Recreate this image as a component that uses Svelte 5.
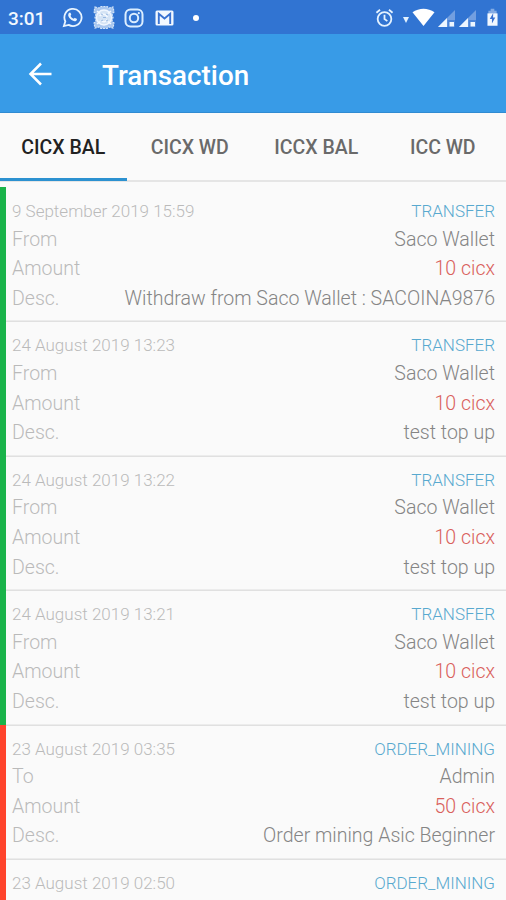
<script>
	const tabs = ['CICX BAL', 'CICX WD', 'ICCX BAL', 'ICC WD'];
	let activeTab = $state(0);

	const transactions = [
		{ date: '9 September 2019 15:59', type: 'TRANSFER', incoming: true, party: 'Saco Wallet', amount: '10 cicx', desc: 'Withdraw from Saco Wallet : SACOINA9876' },
		{ date: '24 August 2019 13:23', type: 'TRANSFER', incoming: true, party: 'Saco Wallet', amount: '10 cicx', desc: 'test top up' },
		{ date: '24 August 2019 13:22', type: 'TRANSFER', incoming: true, party: 'Saco Wallet', amount: '10 cicx', desc: 'test top up' },
		{ date: '24 August 2019 13:21', type: 'TRANSFER', incoming: true, party: 'Saco Wallet', amount: '10 cicx', desc: 'test top up' },
		{ date: '23 August 2019 03:35', type: 'ORDER_MINING', incoming: false, party: 'Admin', amount: '50 cicx', desc: 'Order mining Asic Beginner' },
		// details not loaded yet
		{ date: '23 August 2019 02:50', type: 'ORDER_MINING', incoming: false }
	];
</script>

<div class="screen">
	<div class="status-bar">
		<span class="clock">3:01</span>
		<div class="notifications">
			<!-- WhatsApp -->
			<svg width="21" height="21" viewBox="0 0 22 22" fill="none">
				<path d="M2 20l1.5-5A9 9 0 1 1 7 18.7z" stroke="#e8f4ff" stroke-width="1.9" />
				<path d="M7.3 6.2c.6-.7 1.4-.7 1.7 0l.7 1.7c.1.4-.8 1.1-.7 1.4.7 1.4 1.8 2.4 3.2 3 .4.1 1-1.1 1.4-.9l1.8.9c.5.3.2 1.5-.5 2-1.3 1-3 .6-4.9-.6-1.5-1-3.2-3-3.500-4.700-.1-1.100.2-2.200.8-2.800z" fill="#e8f4ff" />
			</svg>
			<!-- mesh badge -->
			<svg class="mesh" width="22" height="23" viewBox="0 0 22 23" fill="none">
				<path d="M2 1l4 1 2-1.500h6l2 1.500 4-1 1 5-2 2 1 3.500-1 3.500 2 2-1 5-4-1-2 1.500H8L6 21l-4 1-1-5 2-2-1-3.500L3 8 1 6z" fill="#a9c7ef" stroke="#d4e5f8" stroke-width="1.200" stroke-dasharray="2 1" />
				<circle cx="11" cy="11.500" r="7.500" fill="#d5e4f5" stroke="#f1f7ff" stroke-width="1.300" />
				<path d="M4 5l3 2.500M18 5l-3 2.500M4 18l3-2.500M18 18l-3-2.500M6.500 10c3-3 6-2 8 1M8 14.500c2 2 5 1.500 6-1" stroke="#f4f9ff" stroke-width="1.500" />
				<path d="M8 8l2 1M13 8l2 1M8 15l2-1M13 15l2-1M10 11.500h3" stroke="#98b9e3" />
			</svg>
			<!-- Instagram -->
			<svg width="20" height="20" viewBox="0 0 20 20" fill="none" stroke="#dceeff" stroke-width="2">
				<rect x="1.500" y="1.500" width="17" height="17" rx="5" />
				<circle cx="10" cy="10" r="4.200" />
				<circle cx="14.800" cy="5.200" r="1.100" fill="#dceeff" stroke="none" />
			</svg>
			<!-- Gmail -->
			<svg class="mail" width="19" height="16" viewBox="0 0 19 16">
				<rect x="0.500" y="0.500" width="18" height="15" rx="1.500" fill="#f2f8ff" />
				<path d="M3.800 14V3.800l5.700 4.700 5.700-4.700V14" fill="none" stroke="#3972d1" stroke-width="1.900" />
			</svg>
			<i class="dot"></i>
		</div>
		<div class="system">
			<!-- alarm -->
			<svg class="alarm" width="19" height="20" viewBox="0 0 20 20" fill="none" stroke="#e3f2ff" stroke-width="1.900">
				<circle cx="10" cy="11" r="7.200" />
				<path d="M10 6.500V11l3 2.300M1.500 4.500l3.800-3.200M18.500 4.500l-3.800-3.200" />
			</svg>
			<!-- wifi with activity arrow -->
			<svg class="wifi" width="32" height="19" viewBox="0 0 32 19" fill="#fff">
				<path d="M0 9h6l-3 6z" fill="#e3f2ff" />
				<path d="M9.500 4.300C16-.4 25-.4 31.500 4.300L20.500 18z" />
			</svg>
			{#each [0, 1] as sim (sim)}
				<svg class="signal" width="17" height="17" viewBox="0 0 17 17">
					<path d="M0 17L17 0v17z" fill="#729fe0" />
					<path d="M0 17l9-9v9z" fill="#edf6ff" />
					<path d="M9.500 10H17v7H9.500z" fill="#4b84d8" />
					<path d="M11.500 12H16v4.500h-4.500z" fill="#edf6ff" />
				</svg>
			{/each}
			<!-- charging battery -->
			<svg class="battery" width="11" height="19" viewBox="0 0 12 19">
				<path d="M1.500 2H4V0h4v2h2.500v4h-9z" fill="#83abe4" />
				<path d="M.5 5h11v13.500H.5z" fill="#f2f8ff" />
				<path d="M6.800 4.500L3 11h2.400v5L9 9.500H6.600z" fill="#3972d1" />
			</svg>
		</div>
	</div>

	<header class="app-bar">
		<button class="back" aria-label="Back">
			<svg width="24" height="24" viewBox="0 0 24 24" fill="none" stroke="#fff" stroke-width="2.500">
				<path d="M23.500 12H2.500M13 1.500L2.500 12 13 22.500" />
			</svg>
		</button>
		<h1>Transaction</h1>
	</header>

	<nav class="tabs">
		{#each tabs as tab, i (tab)}
			<button class="tab" class:active={activeTab === i} onclick={() => (activeTab = i)}>{tab}</button>
		{/each}
	</nav>

	<main class="list">
		{#each transactions as tx (tx.date)}
			<article class="card" class:incoming={tx.incoming}>
				<div class="row head">
					<span class="label">{tx.date}</span>
					<span class="type">{tx.type}</span>
				</div>
				{#if tx.party}
					<div class="row">
						<span class="label">{tx.incoming ? 'From' : 'To'}</span>
						<span>{tx.party}</span>
					</div>
					<div class="row">
						<span class="label">Amount</span>
						<span class="amount">{tx.amount}</span>
					</div>
					<div class="row">
						<span class="label">Desc.</span>
						<span>{tx.desc}</span>
					</div>
				{/if}
			</article>
		{/each}
	</main>
</div>

<style>
	:global(body) {
		margin: 0;
		overflow: hidden;
	}
	.screen {
		display: flex;
		flex-direction: column;
		width: 100%;
		height: 900px;
		overflow: hidden;
		background: #fafafa;
		font-family: Roboto, sans-serif;
	}
	svg {
		display: block;
		flex: none;
	}
	button {
		padding: 0;
		border: 0;
		background: none;
		font-family: inherit;
	}
	.status-bar {
		display: flex;
		flex: none;
		align-items: center;
		box-sizing: border-box;
		height: 34px;
		padding: 1px 8px 0 8px;
		background: #3174d2;
	}
	.clock {
		width: 54px;
		padding-top: 1px;
		color: #f2f8ff;
		font-size: 19px;
		font-weight: 500;
	}
	.notifications {
		display: flex;
		align-items: center;
		gap: 10px;
	}
	.mesh {
		margin-right: -1px;
	}
	.mail {
		margin-left: 1px;
	}
	.dot {
		width: 6px;
		height: 6px;
		margin-left: 9px;
		border-radius: 50%;
		background: #fff;
	}
	.system {
		display: flex;
		align-items: center;
		margin-left: auto;
	}
	.alarm {
		margin-right: 9px;
	}
	.wifi {
		margin-right: 3px;
	}
	.signal {
		margin: 1px 4px 0 0;
	}
	.battery {
		margin-left: 7px;
	}
	.app-bar {
		display: flex;
		flex: none;
		align-items: center;
		box-sizing: border-box;
		height: 79px;
		padding: 2px 0 0 28px;
		border-bottom: 1px solid #308bd2;
		background: #389be7;
	}
	.back {
		width: 74px;
	}
	h1 {
		margin: 0;
		padding-top: 2px;
		color: #fff;
		font-size: 27.8px;
		font-weight: 500;
	}
	.tabs {
		display: flex;
		flex: none;
		box-sizing: border-box;
		height: 69px;
		border-bottom: 2px solid #e5e5e5;
		background: #fafafa;
	}
	.tab {
		flex: 1;
		box-sizing: border-box;
		height: 68px;
		padding-top: 4px;
		border-bottom: 3px solid transparent;
		color: #6a6a6a;
		font-size: 19.5px;
		font-weight: 500;
	}
	.tab.active {
		border-color: #2c91d0;
		color: #222;
	}
	.list {
		padding-top: 5px;
	}
	.card {
		box-sizing: border-box;
		height: 134.4px;
		padding: 11px 11px 0 6px;
		border-left: 6px solid #ff432c;
		box-shadow: 0 1px #e0e0e0, inset 0 -1px #ececec;
	}
	.card.incoming {
		border-left-color: #1ab34a;
	}
	.row {
		display: flex;
		justify-content: space-between;
		color: #858585;
		font-size: 19.55px;
		font-weight: 300;
		line-height: 29.6px;
		white-space: nowrap;
	}
	.head {
		font-size: 17px;
		line-height: 26.6px;
	}
	.label {
		color: #bababa;
	}
	.type {
		color: #58a9cf;
	}
	.amount {
		color: #d9605a;
	}
</style>
